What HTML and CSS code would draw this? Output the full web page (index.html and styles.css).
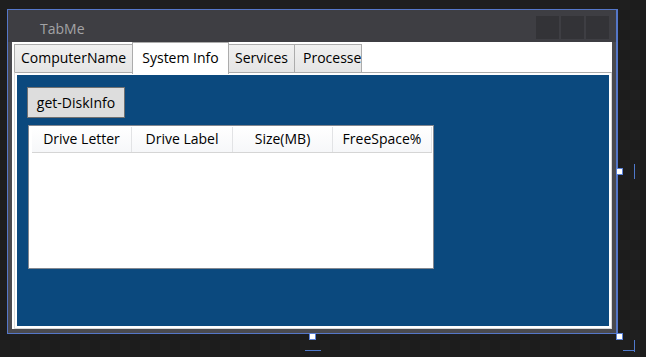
FILE: index.html
```html
<!doctype html>
<html>
  <head>
    <meta charset="UTF-8" />
    <meta name="viewport" content="width=device-width, initial-scale=1.0" />
    <title>TabMe</title>
    <link rel="stylesheet" href="styles.css">
  </head>
  <body>
    <div class="desktop">
      <div class="window">
        <div class="titlebar">
          <span class="title">TabMe</span>
          <div class="caption-buttons">
            <span></span><span></span><span></span>
          </div>
        </div>

        <div class="client">
          <div class="tabs">
            <div class="tab tab-computer">ComputerName</div>
            <div class="tab tab-system selected">System Info</div>
            <div class="tab tab-services">Services</div>
            <div class="tab tab-processes">Processes</div>
          </div>

          <div class="tab-panel">
            <div class="panel-content">
              <button class="btn">get-DiskInfo</button>

              <div class="list">
                <div class="list-header">
                  <div class="col col-letter">Drive Letter</div>
                  <div class="col col-label">Drive Label</div>
                  <div class="col col-size">Size(MB)</div>
                  <div class="col col-free">FreeSpace%</div>
                </div>
              </div>
            </div>
          </div>
        </div>
      </div>

      <!-- designer resize handles and guides -->
      <span class="handle handle-right"></span>
      <span class="handle handle-corner"></span>
      <span class="handle handle-bottom"></span>

      <span class="guide guide-right"></span>
      <span class="guide guide-corner-v"></span>
      <span class="guide guide-corner-h"></span>
      <span class="guide guide-bottom"></span>
    </div>
  </body>
</html>
```

FILE: styles.css
```css
html,
body {
  margin: 0;
  padding: 0;
}

body {
  width: 646px;
  height: 357px;
  overflow: hidden;
  background-color: #1e1e1e;
  background-image: conic-gradient(#1c1c1c 25%, #1f1f1f 0 50%, #1c1c1c 0 75%, #1f1f1f 0);
  background-size: 20px 20px;
  font-family: "Open Sans", "Noto Sans", sans-serif;
}

.desktop {
  position: relative;
  width: 646px;
  height: 357px;
}

/* Window */
.window {
  position: absolute;
  left: 7px;
  top: 9px;
  width: 611px;
  height: 325px;
  box-sizing: border-box;
  border: 1px solid #5577c8;
  border-right-width: 2px;
  background-color: #4a4a4f;
  display: flex;
  flex-direction: column;
}

.titlebar {
  height: 32px;
  flex-shrink: 0;
  display: flex;
  background-color: #3e3e43;
}

.title {
  padding-left: 32px;
  padding-top: 9px;
  font-size: 14px;
  color: #a3a3a6;
}

.caption-buttons {
  margin-left: auto;
  margin-right: 7px;
  margin-top: 6px;
  display: flex;
  gap: 2px;
}

.caption-buttons span {
  width: 23px;
  height: 23px;
  background-color: #333337;
}

.client {
  flex: 1;
  margin: 0 4px 4px;
  background-color: #fff;
  display: flex;
  flex-direction: column;
}

/* Tabs */
.tabs {
  display: flex;
  height: 30px;
  padding-left: 2px;
  flex-shrink: 0;
}

.tab {
  box-sizing: border-box;
  height: 28px;
  margin-top: 2px;
  border: 1px solid #acacac;
  border-bottom: none;
  background: linear-gradient(#f0f0f0, #e5e5e5);
  font-size: 14px;
  line-height: 26px;
  color: #000;
  text-align: center;
  white-space: nowrap;
  overflow: hidden;
}

.tab-computer {
  width: 118px;
  border-right: none;
}

.tab-system {
  width: 97px;
}

.tab-services {
  width: 66px;
  border-left: none;
}

.tab-processes {
  width: 67px;
  border-left: none;
  text-align: left;
  padding-left: 8px;
}

.tab.selected {
  position: relative;
  z-index: 1;
  height: 32px;
  margin-top: 0;
  margin-bottom: -2px;
  background: #fff;
  line-height: 30px;
}

.tab-panel {
  flex: 1;
  margin-left: 2px;
  border: 1px solid #d9d9d9;
  border-top-color: #acacac;
  padding: 2px;
  display: flex;
}

.panel-content {
  flex: 1;
  background-color: #0b497e;
  padding: 12px 10px;
  display: flex;
  flex-direction: column;
  align-items: flex-start;
}

.btn {
  width: 98px;
  height: 31px;
  padding: 0;
  background-color: #dddddd;
  border: 1px solid #707070;
  font-family: inherit;
  font-size: 14px;
  color: #000;
}

/* Disk list */
.list {
  box-sizing: border-box;
  width: 406px;
  height: 144px;
  margin-top: 7px;
  margin-left: 1px;
  padding: 1px 1px 1px 3px;
  border: 1px solid #828790;
  background-color: #fff;
}

.list-header {
  display: flex;
  height: 25px;
  border-bottom: 1px solid #d5d5d5;
  background: linear-gradient(#ffffff, #f6f7f9);
}

.col {
  box-sizing: border-box;
  border-right: 1px solid #e2e3e5;
  font-size: 14px;
  line-height: 24px;
  text-align: center;
  color: #000;
  white-space: nowrap;
}

.col-letter {
  width: 100px;
}

.col-label {
  width: 101px;
}

.col-size {
  width: 100px;
}

.col-free {
  width: 99px;
}

/* Designer handles */
.handle {
  position: absolute;
  box-sizing: border-box;
  width: 7px;
  height: 7px;
  background-color: #fff;
  border: 1px solid #5b82d8;
}

.handle-right {
  left: 616px;
  top: 168px;
}

.handle-corner {
  left: 616px;
  top: 333px;
}

.handle-bottom {
  left: 309px;
  top: 333px;
}

.guide {
  position: absolute;
  background-color: #4f79cc;
}

.guide-right {
  left: 634px;
  top: 164px;
  width: 1px;
  height: 15px;
}

.guide-corner-v {
  left: 634px;
  top: 340px;
  width: 1px;
  height: 12px;
}

.guide-corner-h {
  left: 623px;
  top: 350px;
  width: 12px;
  height: 1px;
}

.guide-bottom {
  left: 305px;
  top: 350px;
  width: 16px;
  height: 1px;
}
```
